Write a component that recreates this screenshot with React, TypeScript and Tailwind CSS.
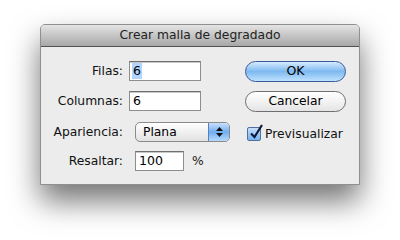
import React from 'react';

const FONT = { fontFamily: '"DejaVu Sans", "Liberation Sans", sans-serif' };

function Field({ value, width, selected }: { value: string; width: string; selected?: boolean }) {
  return (
    <div
      className={`${width} ml-[6px] h-[20px] bg-white border border-[#8e8e8e] border-t-[#6f6f6f] shadow-[inset_0_1px_0_#c8c8c8] flex items-center pl-[2px] text-[12.5px] text-black`}
    >
      <span className={selected ? 'bg-[#b3d4fd] px-[1px] leading-[16px]' : 'px-[1px] leading-[16px]'}>{value}</span>
    </div>
  );
}

function Label({ children }: { children: React.ReactNode }) {
  return <div className="w-[82px] text-right text-[12.3px] text-[#111]">{children}</div>;
}

export default function App() {
  return (
    <div className="w-[400px] h-[240px] bg-white relative overflow-hidden" style={FONT}>
      <div className="absolute left-[40px] top-[24px] w-[320px] h-[161px] rounded-t-[5px] border border-[#8f8f8f] bg-[#ececec] shadow-[0_16px_30px_rgba(0,0,0,0.55)] flex flex-col">
        {/* Title bar */}
        <div className="h-[22px] rounded-t-[4px] bg-gradient-to-b from-[#e4e4e4] to-[#a8a8a8] border-b border-[#515151] flex items-center justify-center text-[12.3px] text-[#222]">
          Crear malla de degradado
        </div>

        <div className="flex pt-[14px]">
          {/* Left column */}
          <div className="flex flex-col w-[204px]">
            <div className="flex items-center h-[20px]">
              <Label>Filas:</Label>
              <Field value="6" width="w-[72px]" selected />
            </div>
            <div className="flex items-center h-[20px] mt-[10px]">
              <Label>Columnas:</Label>
              <Field value="6" width="w-[72px]" />
            </div>
            <div className="flex items-center h-[20px] mt-[11px]">
              <Label>Apariencia:</Label>
              <div className="ml-[12px] w-[95px] h-[20px] rounded-[5px] border border-[#8a8a8a] flex overflow-hidden bg-gradient-to-b from-white to-[#e2e2e2]">
                <div className="flex-1 flex items-center pl-[7px] text-[12.3px] text-black">Plana</div>
                <div className="w-[21px] border-l border-[#5a7fbf] bg-gradient-to-b from-[#c9e0fb] via-[#70aef0] to-[#b5dbfd] flex flex-col items-center justify-center gap-[2px]">
                  <svg width="7" height="4" viewBox="0 0 7 4"><path d="M3.5 0L7 4H0z" fill="#111" /></svg>
                  <svg width="7" height="4" viewBox="0 0 7 4"><path d="M0 0h7L3.5 4z" fill="#111" /></svg>
                </div>
              </div>
            </div>
            <div className="flex items-center h-[20px] mt-[9px]">
              <Label>Resaltar:</Label>
              <div className="ml-[6px]">
                <Field value="100" width="w-[49px]" />
              </div>
              <span className="ml-[8px] text-[12.3px] text-[#222]">%</span>
            </div>
          </div>

          {/* Right column */}
          <div className="flex flex-col">
            <button className="w-[101px] h-[21px] rounded-full border border-[#3b5a9a] bg-gradient-to-b from-[#d6ebfd] via-[#7db9f0] to-[#bfe2fe] text-[12.5px] text-black flex items-center justify-center">
              OK
            </button>
            <button className="w-[101px] h-[21px] mt-[9px] rounded-full border border-[#6f6f6f] bg-gradient-to-b from-white via-[#f3f3f3] to-[#e4e4e4] text-[12.3px] text-black flex items-center justify-center">
              Cancelar
            </button>
            <div className="flex items-center mt-[13px] ml-[2px]">
              <div className="relative w-[14px] h-[14px] rounded-[2px] border border-[#50719f] bg-gradient-to-b from-[#c7defa] to-[#78b2ef]">
                <svg className="absolute left-[1px] top-[-4px]" width="15" height="16" viewBox="0 0 15 16">
                  <path d="M2 9.5L5.5 13L13 1" fill="none" stroke="#0d1a40" strokeWidth="2.2" />
                </svg>
              </div>
              <span className="ml-[4px] text-[12.3px] text-[#111]">Previsualizar</span>
            </div>
          </div>
        </div>
      </div>
    </div>
  );
}
